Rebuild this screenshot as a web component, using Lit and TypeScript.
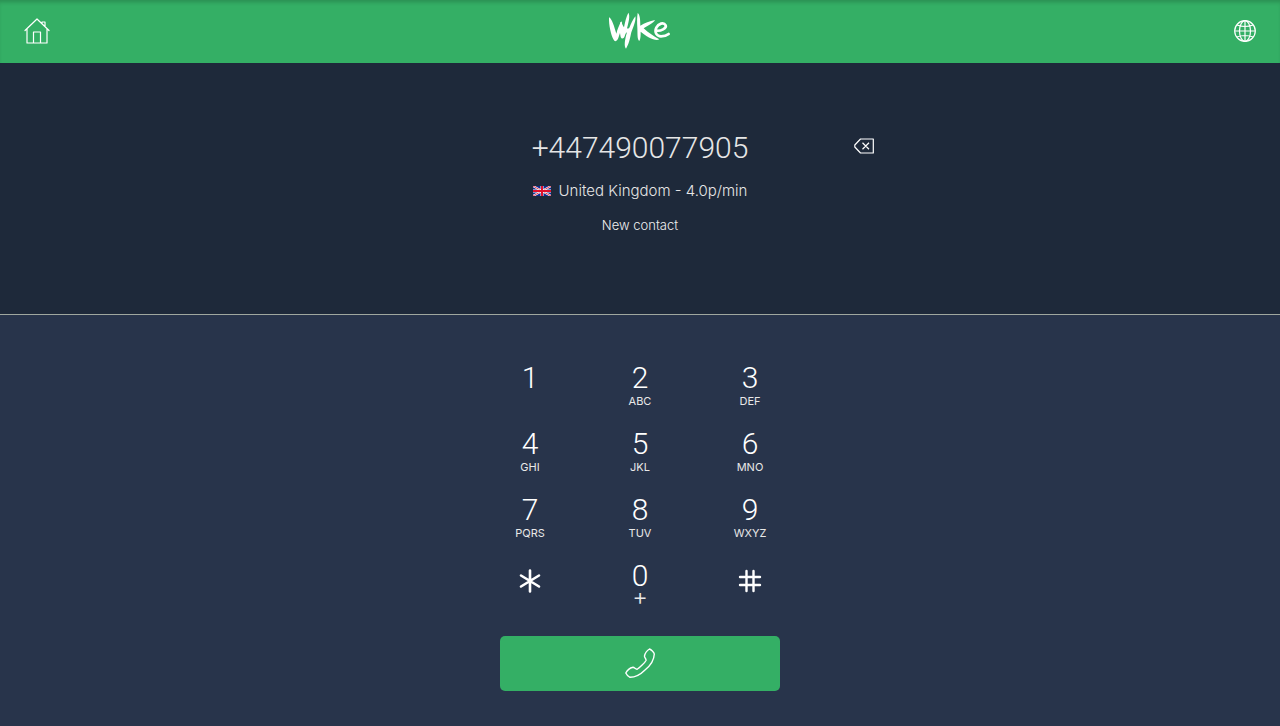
import { LitElement, html, css, svg, nothing } from "lit";
import { customElement, state } from "lit/decorators.js";

interface Key {
  digit: string;
  letters?: string;
}

const KEYS: Key[] = [
  { digit: "1" },
  { digit: "2", letters: "ABC" },
  { digit: "3", letters: "DEF" },
  { digit: "4", letters: "GHI" },
  { digit: "5", letters: "JKL" },
  { digit: "6", letters: "MNO" },
  { digit: "7", letters: "PQRS" },
  { digit: "8", letters: "TUV" },
  { digit: "9", letters: "WXYZ" },
  { digit: "*" },
  { digit: "0", letters: "+" },
  { digit: "#" },
];

const star = svg`<path d="M12 1.500V22.500M3 6.500L21 17.500M21 6.500L3 17.500" stroke-width="2.600" stroke-linecap="round"/>`;
const hash = svg`<path d="M8.500 2V22M15.500 2V22M2 8H22M2 16H22" stroke-width="2.400" stroke-linecap="round"/>`;

@customElement("app-root")
export class AppRoot extends LitElement {
  static styles = css`
    :host {
      display: flex;
      flex-direction: column;
      min-height: 100vh;
      background: #28344b;
      color: #fff;
      font-family: Inter, "Liberation Sans", sans-serif;
      font-weight: 300;
    }
    * {
      box-sizing: border-box;
    }
    button,
    input {
      font: inherit;
      color: inherit;
      background: none;
      border: 0;
      margin: 0;
      padding: 0;
    }
    button {
      cursor: pointer;
    }
    svg {
      display: block;
      fill: none;
      stroke: currentColor;
    }
    header {
      display: grid;
      grid-template-columns: 1fr auto 1fr;
      align-items: center;
      height: 63px;
      padding: 0 24px 2px;
      background: #34af65;
      box-shadow: inset 0 4px 4px -2px rgba(0, 0, 0, 0.2);
    }
    header a {
      color: #fff;
    }
    .language {
      justify-self: end;
    }
    .display {
      display: flex;
      flex-direction: column;
      align-items: center;
      height: 252px;
      padding-top: 64px;
      background: #1e293a;
      border-bottom: 1px solid #a0a79f;
      color: #e6e6e6;
    }
    .entry {
      display: grid;
      grid-template-columns: 40px minmax(0, 400px) 40px;
      align-items: center;
      justify-content: center;
      width: 100%;
    }
    .number {
      grid-column: 2;
      width: 100%;
      height: 40px;
      text-align: center;
      font-family: Roboto, sans-serif;
      font-size: 30px;
    }
    .erase {
      justify-self: start;
      padding: 0 0 2px 14px;
      color: #fff;
    }
    .rate {
      display: flex;
      align-items: center;
      gap: 8px;
      margin: 14px 0 0;
      font-size: 15px;
      line-height: 20px;
    }
    .contact {
      margin-top: 14px;
      font-size: 13px;
      line-height: 20px;
      color: #f0f0f0;
    }
    main {
      display: flex;
      flex-direction: column;
      align-items: center;
      padding: 45px 0 35px;
    }
    .pad {
      display: grid;
      grid-template-columns: repeat(3, 110px);
      grid-auto-rows: 66px;
    }
    .key {
      display: flex;
      flex-direction: column;
      align-items: center;
    }
    .digit {
      font-family: Roboto, sans-serif;
      font-size: 30px;
      line-height: 35px;
    }
    .letters {
      font-size: 11px;
      line-height: 12px;
      font-weight: 400;
      color: #e8e8e8;
    }
    .plus {
      font-size: 24px;
      font-weight: 300;
      line-height: 8px;
    }
    .symbol {
      padding-top: 11px;
    }
    .call {
      display: grid;
      place-items: center;
      width: 280px;
      height: 55px;
      padding-bottom: 2px;
      margin-top: 12px;
      border-radius: 5px;
      background: #34af65;
    }
  `;

  @state() private number = "+447490077905";

  private press(digit: string) {
    this.number += digit;
  }

  private erase() {
    this.number = this.number.slice(0, -1);
  }

  private renderKey({ digit, letters }: Key) {
    const symbol = digit === "*" ? star : digit === "#" ? hash : undefined;
    return html`<button
      class="key"
      type="button"
      aria-label=${digit}
      @click=${() => this.press(digit)}
    >
      ${symbol
        ? html`<span class="symbol"><svg width="24" height="24" viewBox="0 0 24 24" aria-hidden="true">${symbol}</svg></span>`
        : html`<span class="digit">${digit}</span>`}
      ${letters
        ? html`<span class="letters ${letters === "+" ? "plus" : ""}">${letters}</span>`
        : nothing}
    </button>`;
  }

  render() {
    return html`
      <header>
        <a href="#home" aria-label="Home">
          <svg width="26" height="26" viewBox="0 0 26 26" stroke-width="1.200" stroke-linejoin="round" stroke-linecap="round">
            <path d="M1 12.500L13 1L25 12.500M3 10.800V25H23V10.800M9.500 25V14H16.500V25M18 5.500V4H21V8.500" />
          </svg>
        </a>
        <svg class="logo" width="62" height="37" viewBox="42 37 186 111" role="img" aria-label="Vyke">
          <g fill="#fff" stroke="none">
            <path d="M42 53C51 57 58 82 64 102C67 90 72 77 79 65C85 70 78 92 71 112C68 122 63 127 58 123C50 113 41 80 42 53Z" />
            <path d="M76 66C82 71 83 78 87 83C90 68 94 50 100 39C106 48 101 68 96 86C99 88 102 86 104 82C108 72 114 60 121 50C124 60 116 80 109 98C105 117 101 136 93 147C86 140 90 118 96 98C93 99 91 103 89 110C86 118 80 119 77 112C74 100 74 80 76 66Z" />
            <path d="M128 40C135 45 136 60 136 78C149 70 164 65 180 61C175 71 159 77 146 86C160 99 177 111 193 119C181 126 155 111 137 96C137 108 137 117 133 124C126 118 128 103 127 84C126 67 126 52 128 40Z" />
          </g>
          <path stroke="#fff" stroke-width="8" stroke-linecap="round" d="M184 93C197 95 216 86 212 77C206 66 190 72 184 84C177 99 186 110 198 110C208 110 216 107 221 103" />
        </svg>
        <a class="language" href="#language" aria-label="Language">
          <svg width="22" height="22" viewBox="0 0 22 22" stroke-width="1.200">
            <circle cx="11" cy="11" r="10.300" />
            <ellipse cx="11" cy="11" rx="5.500" ry="10.300" />
            <path d="M11 .7V21.300M.7 11H21.300M3 5Q11 8 19 5M3 17Q11 14 19 17" />
          </svg>
        </a>
      </header>

      <section class="display">
        <div class="entry">
          <input
            class="number"
            type="tel"
            aria-label="Phone number"
            .value=${this.number}
          />
          <button class="erase" type="button" aria-label="Delete digit" @click=${this.erase}>
            <svg width="20" height="16" viewBox="0 0 20 16" stroke-width="1.200" stroke-linejoin="round">
              <path d="M6.500 1H19.300V15H6.500L.8 9V7Z M8.500 4.800L15 11.200M15 4.800L8.500 11.200" />
            </svg>
          </button>
        </div>
        <p class="rate">
          <svg width="18" height="10" viewBox="0 0 18 10" role="img" aria-label="United Kingdom flag">
            <path fill="#0d2a8e" stroke="none" d="M0 0H18V10H0Z" />
            <path stroke="#fff" stroke-width="2" d="M0 0L18 10M18 0L0 10" />
            <path stroke="#e0102c" stroke-width=".8" d="M0 0L18 10M18 0L0 10" />
            <path stroke="#fff" stroke-width="3" d="M9 0V10M0 5H18" />
            <path stroke="#e0102c" stroke-width="2" d="M9 0V10M0 5H18" />
          </svg>
          <span>United Kingdom - 4.0p/min</span>
        </p>
        <button class="contact" type="button">New contact</button>
      </section>

      <main>
        <div class="pad">${KEYS.map((key) => this.renderKey(key))}</div>
        <button class="call" type="button" aria-label="Call">
          <svg width="30" height="30" viewBox="0 0 30 30" stroke-width="1.400" stroke-linejoin="round">
            <path d="M24.500 1C26 1.500 29 4 29.300 6C29 13 25 18 20 22C15 27 10 29.300 5 29.300C3 28.500 1.500 26.500 .8 25C2 22.500 5 20 8 19.300C9.500 19.300 10.500 21.500 12 21.300C14 20.500 20 14.500 21 12.500C21.500 11 19.300 9.500 19.500 8C20 5.500 22 2.500 24.500 1Z" />
          </svg>
        </button>
      </main>
    `;
  }
}
